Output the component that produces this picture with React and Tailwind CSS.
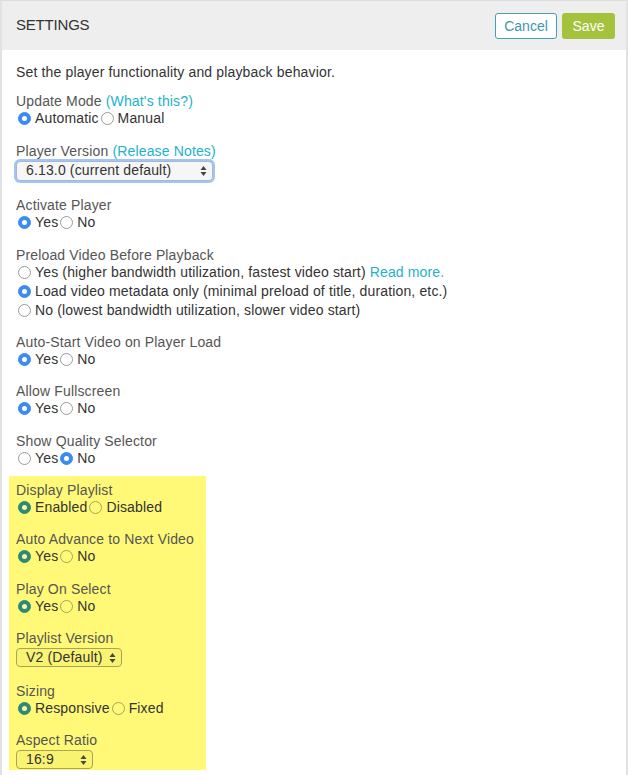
import React from 'react';

const Radio = ({ checked, label, hl }) => {
  // hl = inside the yellow highlight block
  const ring = checked
    ? hl
      ? 'bg-[#2c8a77] border-[#2c8a77]'
      : 'bg-[#3a8cf0] border-[#3a8cf0]'
    : hl
      ? 'bg-[#fffa7a] border-[#a9a453]'
      : 'bg-white border-[#9a9a9a]';
  return (
    <span className="inline-flex items-center">
      <span className={`ml-[2px] mr-[4px] w-[13px] h-[13px] rounded-full border flex items-center justify-center ${ring}`}>
        {checked && <span className={`w-[5px] h-[5px] rounded-full ${hl ? 'bg-[#fff7a8]' : 'bg-white'}`}></span>}
      </span>
      <span className="text-[#333]">{label}</span>
    </span>
  );
};

const SelectBox = ({ value, width, focus, hl }) => (
  <div
    className={`flex items-center justify-between rounded-[4px] border pl-[9px] pr-[5px] ${width} ${
      focus
        ? 'h-[20px] mt-[1px] border-[#9fb9dd] bg-[#f6f6f6] shadow-[0_0_0_2px_rgba(90,150,230,0.55)]'
        : hl
          ? 'h-[19px] mt-[1px] border-[#a9a453] bg-[#f9f372]'
          : 'h-[19px] mt-[1px] border-[#bbb] bg-[#f6f6f6]'
    }`}
  >
    <span className="text-[#333]">{value}</span>
    <svg width="7" height="12" viewBox="0 0 7 12">
      <path d="M3.5 1 L6.5 5 L0.5 5 Z" fill="#444" />
      <path d="M3.5 11 L6.5 7 L0.5 7 Z" fill="#444" />
    </svg>
  </div>
);

const Label = ({ children }) => (
  <div className="h-[17px] leading-[17px] text-[#555]">{children}</div>
);

const Row = ({ children, className = '' }) => (
  <div className={`h-[17px] leading-[17px] flex items-center ${className}`}>{children}</div>
);

export default function App() {
  return (
    <div
      className="w-[628px] h-[775px] overflow-hidden bg-white border-t border-t-[#dcdcdc] border-l-2 border-l-[#e2e2e2] border-r-2 border-r-[#e2e2e2] text-[14px]"
      style={{ fontFamily: '"Liberation Sans", Arial, sans-serif' }}
    >
      {/* Header */}
      <div className="h-[49px] bg-[#eeeeee] flex items-center justify-between pl-[14px] pr-[11px]">
        <div className="text-[15px] text-[#333] tracking-[-0.2px]">SETTINGS</div>
        <div className="flex gap-[5px] mt-[1px]">
          <button className="h-[26px] w-[62px] rounded-[3px] border border-[#4a9eb1] bg-white text-[#3d97aa] text-[14px]">
            Cancel
          </button>
          <button className="h-[26px] w-[53px] rounded-[3px] bg-[#a5c23c] text-white text-[14px]">
            Save
          </button>
        </div>
      </div>

      {/* Body */}
      <div className="pl-[14px] pt-[13.5px] tracking-[0.15px]">
        <div className="h-[17px] leading-[17px] text-[#333] mb-[12px]">
          Set the player functionality and playback behavior.
        </div>

        <div className="mb-[16px]">
          <Label>
            Update Mode <span className="text-[#22b2c9]">(What's this?)</span>
          </Label>
          <Row>
            <Radio checked label="Automatic" />
            <Radio label="Manual" />
          </Row>
        </div>

        <div className="mb-[16px]">
          <Label>
            Player Version <span className="text-[#22b2c9]">(Release Notes)</span>
          </Label>
          <SelectBox value="6.13.0 (current default)" width="w-[197px]" focus />
        </div>

        <div className="mb-[16px]">
          <Label>Activate Player</Label>
          <Row>
            <Radio checked label="Yes" />
            <Radio label="No" />
          </Row>
        </div>

        <div className="mb-[15px]">
          <Label>Preload Video Before Playback</Label>
          <Row>
            <Radio label="Yes (higher bandwidth utilization, fastest video start)" />
            <span className="ml-[4px] text-[#22b2c9]">Read more.</span>
          </Row>
          <Row className="mt-[2px]">
            <Radio checked label="Load video metadata only (minimal preload of title, duration, etc.)" />
          </Row>
          <Row className="mt-[2px]">
            <Radio label="No (lowest bandwidth utilization, slower video start)" />
          </Row>
        </div>

        <div className="mb-[15.5px]">
          <Label>Auto-Start Video on Player Load</Label>
          <Row>
            <Radio checked label="Yes" />
            <Radio label="No" />
          </Row>
        </div>

        <div className="mb-[15.5px]">
          <Label>Allow Fullscreen</Label>
          <Row>
            <Radio checked label="Yes" />
            <Radio label="No" />
          </Row>
        </div>

        <div className="mb-[9.5px]">
          <Label>Show Quality Selector</Label>
          <Row>
            <Radio label="Yes" />
            <Radio checked label="No" />
          </Row>
        </div>

        {/* Highlighted playlist settings */}
        <div className="w-[197px] -ml-[7px] pl-[7px] pt-[5.5px] pb-[1px] bg-[#fff977]">
          <div className="mb-[15.5px]">
            <Label>Display Playlist</Label>
            <Row>
              <Radio checked hl label="Enabled" />
              <Radio hl label="Disabled" />
            </Row>
          </div>

          <div className="mb-[15.5px]">
            <Label>Auto Advance to Next Video</Label>
            <Row>
              <Radio checked hl label="Yes" />
              <Radio hl label="No" />
            </Row>
          </div>

          <div className="mb-[15.5px]">
            <Label>Play On Select</Label>
            <Row>
              <Radio checked hl label="Yes" />
              <Radio hl label="No" />
            </Row>
          </div>

          <div className="mb-[15.5px]">
            <Label>Playlist Version</Label>
            <SelectBox value="V2 (Default)" width="w-[106px]" hl />
          </div>

          <div className="mb-[15.5px]">
            <Label>Sizing</Label>
            <Row>
              <Radio checked hl label="Responsive" />
              <Radio hl label="Fixed" />
            </Row>
          </div>

          <div>
            <Label>Aspect Ratio</Label>
            <SelectBox value="16:9" width="w-[77px]" hl />
          </div>
        </div>
      </div>
    </div>
  );
}
